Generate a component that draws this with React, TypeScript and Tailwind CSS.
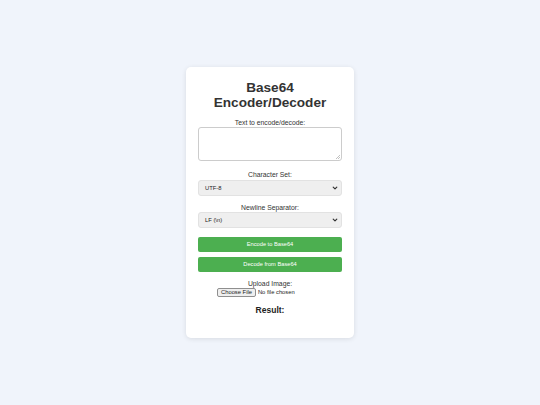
import React from "react"

function Chevron() {
  return (
    <svg width="6" height="6" viewBox="0 0 10 10" fill="none" stroke="#333" strokeWidth="2" strokeLinecap="round" strokeLinejoin="round" aria-hidden="true">
      <path d="M2 3.5 5 6.5 8 3.5" />
    </svg>
  )
}

function FakeSelect({ value }: { value: string }) {
  return (
    <div className="flex h-[16px] w-full items-center justify-between rounded-[3px] border border-[#e2e2e2] bg-[#efefef] pl-[6px] pr-[3px] text-[5.8px] text-[#222]">
      <span>{value}</span>
      <Chevron />
    </div>
  )
}

export default function App() {
  return (
    <div
      className="flex min-h-screen w-full items-center justify-center bg-[#f0f4fb] text-[#333]"
      style={{ fontFamily: '"Liberation Sans", Arial, sans-serif' }}
    >
      <div className="flex h-[271px] w-[168px] flex-col items-center rounded-[5px] bg-white px-3 pt-[13px] pb-3 shadow-[0_1px_5px_rgba(0,0,0,0.1)]">
        <h1 className="text-center text-[13.6px] font-bold leading-[15px] text-[#333]">
          Base64
          <br />
          Encoder/Decoder
        </h1>

        <label className="mt-[9px] text-[6.8px] leading-[8px] text-[#333]">Text to encode/decode:</label>
        <div className="relative h-[34px] w-full shrink-0 rounded-[3px] border border-[#ccc] bg-white">
          <svg className="absolute bottom-[1px] right-[1px]" width="5" height="5" viewBox="0 0 5 5" stroke="#999" strokeWidth="0.6">
            <path d="M5 1 1 5M5 3 3 5" />
          </svg>
        </div>

        <label className="mt-[10px] text-[6.8px] leading-[8px] text-[#333]">Character Set:</label>
        <div className="mt-[1px] w-full">
          <FakeSelect value="UTF-8" />
        </div>

        <label className="mt-[8px] text-[6.8px] leading-[8px] text-[#333]">Newline Separator:</label>
        <div className="w-full">
          <FakeSelect value="LF (\n)" />
        </div>

        <button
          type="button"
          className="mt-[9px] flex h-[15px] w-full shrink-0 items-center justify-center rounded-[2px] bg-[#4caf50] text-[5.7px] text-white"
        >
          Encode to Base64
        </button>
        <button
          type="button"
          className="mt-[5px] flex h-[15px] w-full shrink-0 items-center justify-center rounded-[2px] bg-[#4caf50] text-[5.7px] text-white"
        >
          Decode from Base64
        </button>

        <label className="mt-[8px] text-[6.8px] leading-[8px] text-[#333]">Upload Image:</label>
        <div className="flex h-[9px] w-[106px] items-center gap-[2px] text-[5.8px] text-[#222]">
          <span className="rounded-[2px] border border-[#8f8f8f] bg-[#efefef] px-[3px] leading-[7px]">Choose File</span>
          <span>No file chosen</span>
        </div>

        <h3 className="mt-[8px] text-[8.5px] font-bold leading-[10px] text-[#222]">Result:</h3>
      </div>
    </div>
  )
}
